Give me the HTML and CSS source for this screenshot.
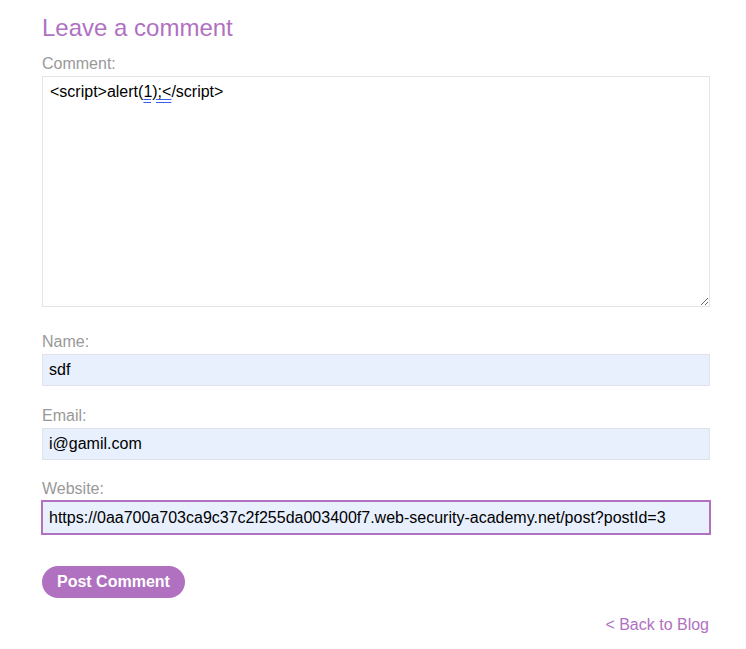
FILE: index.html
```html
<!DOCTYPE html>
<html>
<head>
<meta charset="utf-8">
<link rel="stylesheet" href="styles.css">
</head>
<body>
<section class="comment-form">
  <h2 class="title">Leave a comment</h2>
  <form class="form">
    <label class="label">Comment:</label>
    <div class="textarea"><span>&lt;script&gt;alert(</span><span class="grammar">1);&lt;</span><span>/script&gt;</span></div>
    <label class="label label-first">Name:</label>
    <input class="input" type="text" value="sdf">
    <label class="label label-gap">Email:</label>
    <input class="input" type="text" value="i@gamil.com">
    <label class="label label-gap label-last">Website:</label>
    <input class="input input-focus" type="text" value="https://0aa700a703ca9c37c2f255da003400f7.web-security-academy.net/post?postId=3">
    <div class="actions">
      <button class="button" type="button">Post Comment</button>
    </div>
  </form>
  <div class="back"><a href="#" class="back-link">&lt; Back to Blog</a></div>
</section>
</body>
</html>
```

FILE: styles.css
```css
html, body {
  margin: 0;
  padding: 0;
  background: #fff;
}
body {
  font-family: "Liberation Sans", Arial, sans-serif;
  color: #000;
}
.comment-form {
  width: 668px;
  margin-left: 42px;
  padding-top: 13px;
}
.title {
  margin: 0;
  font-weight: normal;
  font-size: 24px;
  line-height: 30px;
  color: #b071c1;
}
.form {
  display: flex;
  flex-direction: column;
  margin-top: 11px;
}
.label {
  display: block;
  font-size: 16px;
  line-height: 20px;
  color: #999;
  margin-bottom: 2px;
}
.label-first {
  margin-top: 25px;
  margin-bottom: 2px;
}
.label-gap {
  margin-top: 20px;
  margin-bottom: 2px;
}
.label-last {
  margin-top: 19px;
  margin-bottom: 1px;
}
.textarea {
  box-sizing: border-box;
  width: 668px;
  height: 231px;
  border: 1px solid #e4e4e4;
  padding: 6px 7px;
  font-size: 16px;
  line-height: 18px;
  resize: both;
  overflow: auto;
  color: #000;
}
.grammar {
  text-decoration: underline double #3b5ee6;
  text-underline-offset: 2px;
}
.input {
  box-sizing: border-box;
  width: 668px;
  height: 32px;
  margin: 0;
  border: 1px solid #e0e4ea;
  background: #e8f0fe;
  padding: 0 6px;
  font-family: "Liberation Sans", Arial, sans-serif;
  font-size: 16px;
  color: #000;
  outline: none;
}
.input-focus {
  width: 670px;
  height: 35px;
  margin-left: -1px;
  border: 2px solid #b071c1;
}
.actions {
  margin-top: 31px;
}
.button {
  height: 32px;
  padding: 0 15px;
  border: none;
  border-radius: 16px;
  background: #b071c1;
  color: #fff;
  font-family: "Liberation Sans", Arial, sans-serif;
  font-weight: bold;
  font-size: 16px;
  cursor: pointer;
}
.back {
  text-align: right;
  margin-top: 17px;
  padding-right: 1px;
}
.back-link {
  color: #b071c1;
  text-decoration: none;
  font-size: 16px;
  line-height: 20px;
}
```
